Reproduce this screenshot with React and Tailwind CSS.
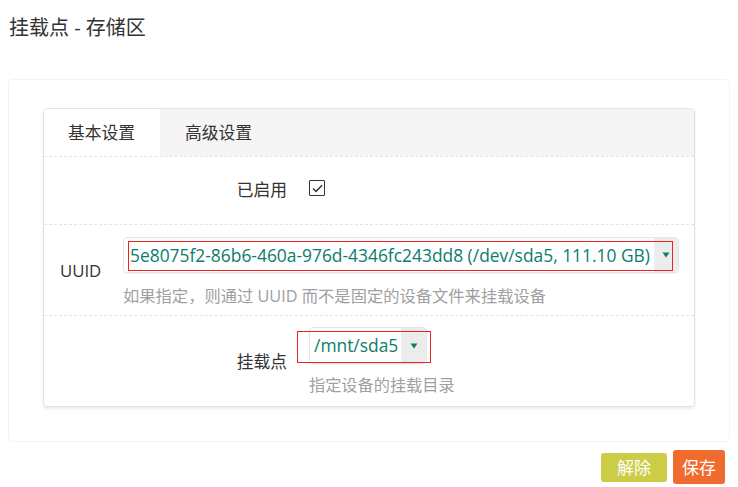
import React from 'react';

const font = { fontFamily: '"Open Sans", "Noto Sans CJK SC", sans-serif' };

const Arrow = () => (
  <svg width="8" height="6" viewBox="0 0 8 6">
    <path d="M0.5 0.5 L7.5 0.5 L4 5.5 Z" fill="#0b7d6c" />
  </svg>
);

const App = () => {
  return (
    <div className="w-[738px] h-[487px] bg-white text-[#333] overflow-hidden" style={font}>
      {/* Title */}
      <h2 className="pl-[9px] pt-[14px] text-[20px] leading-[28px] text-[#333]">挂载点 - 存储区</h2>

      {/* Outer panel */}
      <div className="ml-[8px] mt-[37px] w-[722px] border border-[#f3f3f3] rounded-[4px] pt-[28px] pb-[34px] px-[34px]">
        {/* Card */}
        <div className="border border-[#dfe4e6] rounded-[4px] shadow-[0_2px_3px_rgba(0,0,0,0.08)] overflow-hidden">
          {/* Tabs */}
          <div className="flex h-[47px] bg-[#f5f5f5]">
            <div className="w-[116px] bg-white pl-[24px] flex items-center text-[16.75px]">基本设置</div>
            <div className="pl-[25px] flex items-center text-[16.75px]">高级设置</div>
          </div>

          <div className="border-t border-dashed border-[#e4e4e4]">
            {/* Enabled */}
            <div className="flex h-[68px] pt-[21px] border-b border-dashed border-[#e4e4e4]">
              <div className="w-[243px] text-right text-[16.75px] leading-[24px]">已启用</div>
              <div className="ml-[22px] mt-[2px] w-[16px] h-[16px] border-[1.5px] border-[#333] rounded-[1px] flex items-center justify-center">
                <svg width="11" height="9" viewBox="0 0 11 9">
                  <path d="M1 4.5 L4 7.5 L10 1.2" fill="none" stroke="#333" strokeWidth="1.5" />
                </svg>
              </div>
            </div>

            {/* UUID */}
            <div className="flex h-[91px] pt-[12px] border-b border-dashed border-[#e4e4e4]">
              <div className="w-[79px] pl-[16px] pt-[22px] text-[16.75px] leading-[24px]">UUID</div>
              <div className="flex-1 pr-[15px]">
                <div className="relative flex h-[36px] border border-[#e3e6e8] rounded-[4px] shadow-[0_1px_1px_rgba(0,0,0,0.05)]">
                  <div className="flex-1 pl-[6px] flex items-center text-[17.4px] text-[#0b7d6c] whitespace-nowrap">
                    5e8075f2-86b6-460a-976d-4346fc243dd8 (/dev/sda5, 111.10 GB)
                  </div>
                  <div className="w-[24px] bg-[#ececec] flex items-center justify-center rounded-r-[4px]">
                    <Arrow />
                  </div>
                  <div className="absolute left-[4px] right-[5px] top-[3px] bottom-[1px] border border-[#ee2222]" />
                </div>
                <div className="mt-[11px] text-[16.3px] leading-[24px] text-[#a0a0a0] whitespace-nowrap">如果指定，则通过 UUID 而不是固定的设备文件来挂载设备</div>
              </div>
            </div>

            {/* Mount point */}
            <div className="flex h-[90px] pt-[11px]">
              <div className="w-[243px] pt-[23px] text-right text-[16.75px] leading-[24px]">挂载点</div>
              <div className="ml-[22px]">
                <div className="relative flex w-[118px] h-[37px] border border-[#e3e6e8] rounded-[4px] shadow-[0_1px_1px_rgba(0,0,0,0.05)]">
                  <div className="flex-1 pl-[4px] flex items-center text-[17.4px] text-[#0b7d6c]">/mnt/sda5</div>
                  <div className="w-[25px] bg-[#ececec] flex items-center justify-center rounded-r-[4px]">
                    <Arrow />
                  </div>
                  <div className="absolute left-[-13px] right-[-5px] top-[3px] bottom-[0px] border border-[#ee2222]" />
                </div>
                <div className="mt-[9px] text-[16.2px] leading-[24px] text-[#a0a0a0] whitespace-nowrap">指定设备的挂载目录</div>
              </div>
            </div>
          </div>
        </div>
      </div>

      {/* Actions */}
      <div className="flex justify-end items-center gap-[6px] pr-[13px] mt-[8px]">
        <button className="w-[66px] h-[29px] rounded-[3px] bg-[#cccc46] text-white text-[17px] leading-none">解除</button>
        <button className="w-[52px] h-[34px] rounded-[3px] bg-[#f06c2e] text-white text-[17px] leading-none">保存</button>
      </div>
    </div>
  );
};

export default App;
